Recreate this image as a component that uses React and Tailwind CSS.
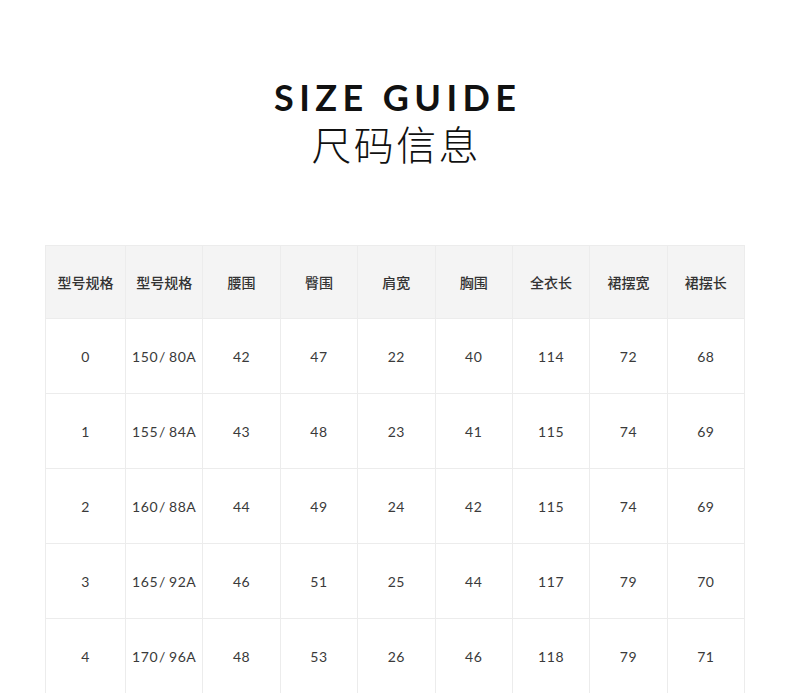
const HEAD = ['型号规格', '型号规格', '腰围', '臀围', '肩宽', '胸围', '全衣长', '裙摆宽', '裙摆长']

const ROWS = [
  ['0', '150/80A', '42', '47', '22', '40', '114', '72', '68'],
  ['1', '155/84A', '43', '48', '23', '41', '115', '74', '69'],
  ['2', '160/88A', '44', '49', '24', '42', '115', '74', '69'],
  ['3', '165/92A', '46', '51', '25', '44', '117', '79', '70'],
  ['4', '170/96A', '48', '53', '26', '46', '118', '79', '71'],
]

const cjk = "font-['Noto_Sans_CJK_SC',sans-serif]"

function Cell({ value }) {
  const parts = value.split('/')
  if (parts.length < 2) return value
  return (
    <>
      {parts[0]}
      <span className="ml-[1px] mr-[3px]">/</span>
      {parts[1]}
    </>
  )
}

export default function App() {
  return (
    <div className="w-[790px] h-[693px] overflow-hidden bg-white">
      {/* Title */}
      <div className="flex flex-col items-center pt-[78px]">
        <h1 className="font-['Lato',sans-serif] font-bold text-[36px] leading-[38px] tracking-[0.15em] pl-[0.15em] text-[#111]">
          SIZE GUIDE
        </h1>
        <p className={`${cjk} font-light text-[40px] leading-[48px] tracking-[0.06em] pl-[0.06em] text-[#111] mt-[3px]`}>
          尺码信息
        </p>
      </div>

      {/* Table */}
      <div className="mt-[78px] ml-[45px] w-[700px] border border-[#ececec] bg-[#ececec] grid grid-cols-[79px_repeat(8,1fr)] gap-px">
        {HEAD.map((h, i) => (
          <div key={i} className={`${cjk} h-[72px] bg-[#f4f4f4] flex items-center justify-center text-[14px] font-medium text-[#333]`}>
            {h}
          </div>
        ))}
        {ROWS.map((r, ri) =>
          r.map((c, ci) => (
            <div key={ri + '-' + ci} className="h-[74px] bg-white flex items-center justify-center font-['Lato',sans-serif] text-[14px] text-[#3a3a3a] tracking-[0.04em]">
              <Cell value={c} />
            </div>
          ))
        )}
      </div>
    </div>
  )
}
